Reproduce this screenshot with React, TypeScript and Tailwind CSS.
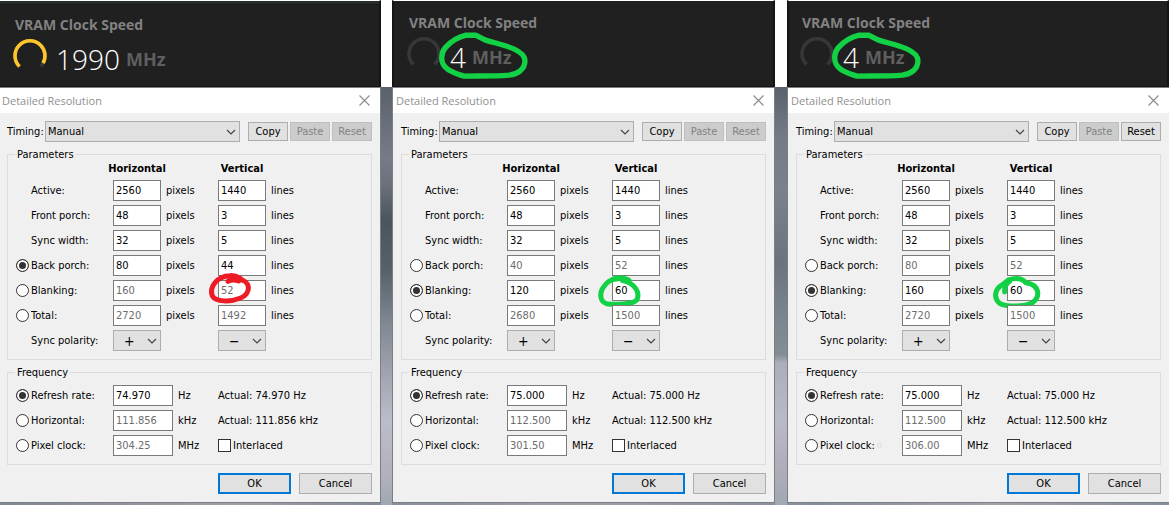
import { useId, useState } from "react";
import type { ReactNode } from "react";
import clsx from "clsx";

type ParamMode = "back" | "blanking" | "total";
type FreqMode = "refresh" | "horizontal" | "clock";

interface Capture {
  id: string;
  clock: string;
  load: number;
  titleClass: string;
  frameClass: string;
  dialogClass: string;
  circledClock?: boolean;
  resetEnabled?: boolean;
  smudge?: boolean;
  paramMode: ParamMode;
  mark: { color: string; viewBox: string; path: string };
  backPorch: [string, string];
  blanking: [string, string];
  total: [string, string];
  refresh: string;
  horizontal: string;
  pixelClock: string;
}

const captures: Capture[] = [
  {
    id: "a",
    clock: "1990",
    load: 0.94,
    titleClass: "pl-3 pt-4",
    frameClass:
      "border-r-2 bg-[linear-gradient(#262c2a_3px,#171717_3px,#171717_4px,#202020_4px)]",
    dialogClass: "border-r pl-[7px]",
    paramMode: "back",
    mark: {
      color: "#ed1c24",
      viewBox: "609 366 153 111",
      path: "M684 394 Q700 386 716 393 M716 388 C755 392 753 432 722 444 C690 457 648 456 637 438 C627 412 650 378 690 377 C702 376 712 380 722 386"
    },
    backPorch: ["80", "44"],
    blanking: ["160", "52"],
    total: ["2720", "1492"],
    refresh: "74.970",
    horizontal: "111.856",
    pixelClock: "304.25"
  },
  {
    id: "b",
    clock: "4",
    load: 0,
    titleClass: "pl-3 pt-3.5",
    frameClass: "border-x-2 bg-[#202020]",
    dialogClass: "border-x pl-2",
    circledClock: true,
    paramMode: "blanking",
    mark: {
      color: "#12d145",
      viewBox: "651 366 153 111",
      path: "M694 391 C705 380 738 383 748 392 M728 392 C765 400 782 428 770 450 C760 464 700 464 680 461 C660 455 658 432 668 415 C678 398 692 386 712 387"
    },
    backPorch: ["40", "52"],
    blanking: ["120", "60"],
    total: ["2680", "1500"],
    refresh: "75.000",
    horizontal: "112.500",
    pixelClock: "301.50"
  },
  {
    id: "c",
    clock: "4",
    load: 0,
    titleClass: "pl-2.5 pt-3.5",
    frameClass: "border-x-2 bg-[#202020]",
    dialogClass: "border-l pl-2",
    circledClock: true,
    resetEnabled: true,
    smudge: true,
    paramMode: "blanking",
    mark: {
      color: "#12d145",
      viewBox: "651 366 153 111",
      path: "M689 426 C688 408 694 400 704 394 M700 390 C730 380 745 390 752 398 C795 404 797 440 772 458 C745 472 690 470 674 460 C655 444 660 420 676 408 C688 400 694 396 700 390"
    },
    backPorch: ["80", "52"],
    blanking: ["160", "60"],
    total: ["2720", "1500"],
    refresh: "75.000",
    horizontal: "112.500",
    pixelClock: "306.00"
  }
];

const inputClass =
  "h-[21px] w-full border border-[#7a7a7a] bg-white px-0.5 text-[11px] text-black outline-none focus:border-[#0078d7] disabled:text-[#6d6d6d]";
const buttonClass =
  "border border-[#adadad] bg-[#e1e1e1] text-center text-[11px] hover:border-[#0078d7] disabled:border-[#bfbfbf] disabled:bg-[#cccccc] disabled:text-[#838383]";

function Gauge({ load }: { load: number }) {
  const arc = "M7.5 29.5 A15 15 0 1 1 28.5 29.5";
  return (
    <svg width="36" height="36" viewBox="0 0 36 36" fill="none" aria-hidden>
      <path d={arc} stroke="#373737" strokeWidth="3.6" />
      {load > 0 && (
        <path
          d={arc}
          stroke="#ffc62b"
          strokeWidth="3.6"
          pathLength={1}
          strokeDasharray={`${load} 1`}
        />
      )}
    </svg>
  );
}

function ClockReadout({ capture }: { capture: Capture }) {
  return (
    <section
      className={clsx(
        "h-[87px] overflow-hidden border-t border-b border-[#141414] border-t-white font-['Open_Sans',sans-serif]",
        capture.frameClass,
        capture.titleClass
      )}>
      <h2 className="px-[3px] text-sm leading-4 font-bold text-[#828282]">
        VRAM Clock Speed
      </h2>
      <div className="flex items-start gap-2 pt-1">
        <Gauge load={capture.load} />
        <div className="relative flex items-center gap-1.5 pt-1">
          <span className="text-[28px] leading-9 font-light text-white">
            {capture.clock}
          </span>
          <span className="text-lg leading-6 font-bold text-[#5f5f5f]">
            MHz
          </span>
          {capture.circledClock && (
            <svg
              className="absolute -top-1.5 -left-3 h-[52px] w-[96px]"
              viewBox="178 88 286 154"
              fill="none"
              stroke="#12d145"
              strokeWidth="16"
              strokeLinecap="round"
              strokeLinejoin="round"
              aria-hidden>
              <path d="M262 106 L290 106 L318 120 C350 130 375 135 402 146 C420 154 437 165 437 182 C437 208 415 222 390 225 C345 229 300 227 255 228 C238 222 215 216 203 204 C185 190 185 160 200 143 C214 127 232 113 262 106 Z" />
            </svg>
          )}
        </div>
      </div>
    </section>
  );
}

function Chevron() {
  return (
    <svg
      className="pointer-events-none absolute top-1/2 right-[3px] h-2 w-3 -translate-y-1/2"
      viewBox="0 0 12 8"
      fill="none"
      stroke="#444"
      strokeWidth="1.2"
      aria-hidden>
      <path d="M2 2 L6 6 L10 2" />
    </svg>
  );
}

function Select({
  options,
  label,
  id,
  className
}: {
  options: string[];
  label?: string;
  id?: string;
  className: string;
}) {
  return (
    <div className="relative w-full">
      <select
        id={id}
        aria-label={label}
        className={clsx(
          "block h-[21px] w-full appearance-none border border-[#adadad] bg-[#e1e1e1] outline-none",
          className
        )}>
        {options.map((option) => (
          <option key={option}>{option}</option>
        ))}
      </select>
      <Chevron />
    </div>
  );
}

function Radio({
  label,
  name,
  checked,
  onSelect
}: {
  label: string;
  name: string;
  checked: boolean;
  onSelect: () => void;
}) {
  return (
    <label className="flex items-center gap-0.5 pl-2">
      <input
        type="radio"
        name={name}
        checked={checked}
        onChange={onSelect}
        className="size-[13px] shrink-0 appearance-none rounded-full border border-[#333] bg-white checked:bg-[#333] checked:shadow-[inset_0_0_0_2px_#fff]"
      />
      {label}
    </label>
  );
}

function Group({ title, children }: { title: string; children: ReactNode }) {
  return (
    <fieldset className="mt-1.5 min-w-0 border border-[#dcdcdc] pb-2">
      <legend className="ml-[7px] px-0.5 leading-[13px]">{title}</legend>
      {children}
    </fieldset>
  );
}

function ParamRow({
  label,
  control,
  values,
  disabled,
  mark
}: {
  label: string;
  control?: ReactNode;
  values: [string, string];
  disabled?: boolean;
  mark?: Capture["mark"];
}) {
  const id = useId();
  return (
    <div className="grid h-[21px] grid-cols-[105px_48px_57px_48px_1fr] items-center">
      {control ?? (
        <label htmlFor={id} className="pl-[23px]">
          {label}
        </label>
      )}
      <input
        id={id}
        aria-label={`${label} horizontal`}
        className={inputClass}
        defaultValue={values[0]}
        disabled={disabled}
      />
      <span className="pl-[5px]">pixels</span>
      <div className="relative">
        <input
          aria-label={`${label} vertical`}
          className={clsx(inputClass, "block")}
          defaultValue={values[1]}
          disabled={disabled}
        />
        {mark && (
          <svg
            className="pointer-events-none absolute -top-2 -left-[15px] h-[37px] w-[51px]"
            viewBox={mark.viewBox}
            fill="none"
            stroke={mark.color}
            strokeWidth="15"
            strokeLinecap="round"
            strokeLinejoin="round"
            aria-hidden>
            <path d={mark.path} />
          </svg>
        )}
      </div>
      <span className="pl-[5px]">lines</span>
    </div>
  );
}

function Parameters({ capture }: { capture: Capture }) {
  const [mode, setMode] = useState<ParamMode>(capture.paramMode);

  const modes: { key: ParamMode; label: string; values: [string, string] }[] = [
    { key: "back", label: "Back porch:", values: capture.backPorch },
    { key: "blanking", label: "Blanking:", values: capture.blanking },
    { key: "total", label: "Total:", values: capture.total }
  ];

  return (
    <Group title="Parameters">
      <div className="flex flex-col gap-1">
        <div className="grid h-[15px] grid-cols-[105px_48px_57px_48px_1fr] leading-[15px] font-bold">
          <span className="col-start-2 flex justify-center">Horizontal</span>
          <span className="col-start-4 flex justify-center">Vertical</span>
        </div>
        <ParamRow label="Active:" values={["2560", "1440"]} />
        <ParamRow label="Front porch:" values={["48", "3"]} />
        <ParamRow label="Sync width:" values={["32", "5"]} />
        {modes.map(({ key, label, values }) => (
          <ParamRow
            key={key}
            label={label}
            values={values}
            disabled={mode !== key}
            mark={key === "blanking" ? capture.mark : undefined}
            control={
              <Radio
                label={label}
                name={`param-${capture.id}`}
                checked={mode === key}
                onSelect={() => setMode(key)}
              />
            }
          />
        ))}
        <div className="grid h-[21px] grid-cols-[105px_48px_57px_48px_1fr] items-center">
          <label htmlFor={`polarity-${capture.id}`} className="pl-[23px]">
            Sync polarity:
          </label>
          <Select
            id={`polarity-${capture.id}`}
            options={["+", "−"]}
            className="pl-2.5 text-sm leading-4"
          />
          <span />
          <Select
            label="Vertical sync polarity"
            options={["−", "+"]}
            className="pl-2.5 text-sm leading-4"
          />
        </div>
      </div>
    </Group>
  );
}

function Frequency({ capture }: { capture: Capture }) {
  const [mode, setMode] = useState<FreqMode>("refresh");

  const rows: { key: FreqMode; label: string; value: string; unit: string }[] =
    [
      {
        key: "refresh",
        label: "Refresh rate:",
        value: capture.refresh,
        unit: "Hz"
      },
      {
        key: "horizontal",
        label: "Horizontal:",
        value: capture.horizontal,
        unit: "kHz"
      },
      {
        key: "clock",
        label: "Pixel clock:",
        value: capture.pixelClock,
        unit: "MHz"
      }
    ];

  return (
    <Group title="Frequency">
      <div className="flex flex-col gap-1 pt-1.5">
        {rows.map(({ key, label, value, unit }) => (
          <div
            key={key}
            className="relative grid h-[21px] grid-cols-[105px_60px_45px_1fr] items-center">
            <Radio
              label={label}
              name={`freq-${capture.id}`}
              checked={mode === key}
              onSelect={() => setMode(key)}
            />
            <input
              aria-label={label}
              className={inputClass}
              defaultValue={value}
              disabled={mode !== key}
            />
            <span className="pl-[5px]">{unit}</span>
            {key === "clock" ? (
              <label className="flex items-center gap-0.5">
                <input
                  type="checkbox"
                  className="size-[13px] appearance-none border border-[#333] bg-white checked:bg-[#333] checked:shadow-[inset_0_0_0_2px_#fff]"
                />
                Interlaced
              </label>
            ) : (
              <span>
                Actual: {value} {unit}
              </span>
            )}
            {key === "clock" && capture.smudge && (
              <span className="absolute top-2 left-20 size-[5px] rounded-full border border-[#dcdcdc]" />
            )}
          </div>
        ))}
      </div>
    </Group>
  );
}

function ResolutionDialog({ capture }: { capture: Capture }) {
  const timingId = `timing-${capture.id}`;
  return (
    <section
      className={clsx(
        "border-y border-[#7b7f84] bg-[#f0f0f0] bg-[linear-gradient(#fff_25px,transparent_25px)] pr-2 pb-2 font-['DejaVu_Sans_Condensed','DejaVu_Sans',sans-serif] text-[11px] leading-[15px] text-black",
        capture.dialogClass
      )}>
      <header className="-ml-[5px] flex h-[25px] items-center justify-between font-['Open_Sans',sans-serif] text-[#8f8f8f]">
        <h3>Detailed Resolution</h3>
        <button aria-label="Close" className="px-0.5">
          <svg
            width="11"
            height="11"
            viewBox="0 0 11 11"
            stroke="#8a8a8a"
            strokeWidth="1.1"
            aria-hidden>
            <path d="M0.5 0.5 L10.5 10.5 M10.5 0.5 L0.5 10.5" />
          </svg>
        </button>
      </header>
      <div className="flex items-center pt-2">
        <label htmlFor={timingId} className="w-[38px] shrink-0">
          Timing:
        </label>
        <Select
          id={timingId}
          options={["Manual", "Automatic"]}
          className="pl-0.5 text-[11px]"
        />
        <div className="flex gap-0.5 pl-2">
          <button className={clsx(buttonClass, "h-[19px] w-10")}>Copy</button>
          <button disabled className={clsx(buttonClass, "h-[19px] w-10")}>
            Paste
          </button>
          <button
            disabled={!capture.resetEnabled}
            className={clsx(buttonClass, "h-[19px] w-10")}>
            Reset
          </button>
        </div>
      </div>
      <Parameters capture={capture} />
      <Frequency capture={capture} />
      <footer className="mt-2 flex justify-end gap-2">
        <button className="h-[21px] w-[73px] border-2 border-[#0078d7] bg-[#e1e1e1] text-[11px]">
          OK
        </button>
        <button className={clsx(buttonClass, "h-[21px] w-[73px]")}>
          Cancel
        </button>
      </footer>
    </section>
  );
}

function CapturePanel({ capture }: { capture: Capture }) {
  return (
    <article className="min-w-0">
      <ClockReadout capture={capture} />
      <ResolutionDialog capture={capture} />
    </article>
  );
}

// Strip of blurred wallpaper that shows between two captures
function Gutter({ className }: { className: string }) {
  return (
    <div className="flex flex-col">
      <div className="h-[87px] bg-white" />
      <div className={clsx("flex-1", className)} />
    </div>
  );
}

export default function App() {
  return (
    <main className="min-h-screen bg-[linear-gradient(90deg,#7f8890,#a39fa8_20%,#858e98_32%,#a09fa8_50%,#868f98_70%,#a3a2ab_85%,#868f98)]">
      <div className="grid min-h-screen grid-cols-[381fr_11px_383fr_12px_382fr]">
        <CapturePanel capture={captures[0]} />
        <Gutter className="bg-[linear-gradient(#59616b,#777b88_17%,#6c717c_23%,#4a555d_32%,#56616a_44%,#7b848e_55%,#9b9eaa_66%,#bcbdca_80%,#b1b1bd_93%,#a0a8b1)]" />
        <CapturePanel capture={captures[1]} />
        <Gutter className="bg-[linear-gradient(#59626d,#747b86_12%,#7a818d_25%,#6b737d_42%,#7a858d_55%,#828d94_64%,#acaeba_66%,#b9bac7_80%,#adadb8_92%,#a0a8b1)]" />
        <CapturePanel capture={captures[2]} />
      </div>
    </main>
  );
}
